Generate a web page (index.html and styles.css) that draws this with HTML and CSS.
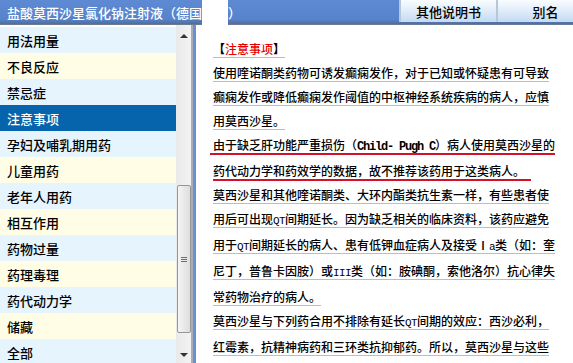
FILE: index.html
```html
<!DOCTYPE html>
<html lang="zh-CN">
<head>
<meta charset="utf-8">
<title>盐酸莫西沙星氯化钠注射液</title>
<link rel="stylesheet" href="styles.css">
</head>
<body>
<div class="app">
  <header class="topbar">
    <h1 class="title">盐酸莫西沙星氯化钠注射液（德国<span class="redact"></span>）</h1>
    <nav class="tabs">
      <button class="tab">其他说明书</button>
      <button class="tab">别名</button>
    </nav>
  </header>
  <div class="main">
    <aside class="side">
      <ul class="menu">
        <li class="item">用法用量</li>
        <li class="item">不良反应</li>
        <li class="item">禁忌症</li>
        <li class="item active">注意事项</li>
        <li class="item">孕妇及哺乳期用药</li>
        <li class="item">儿童用药</li>
        <li class="item">老年人用药</li>
        <li class="item">相互作用</li>
        <li class="item">药物过量</li>
        <li class="item">药理毒理</li>
        <li class="item">药代动力学</li>
        <li class="item">储藏</li>
        <li class="item">全部</li>
      </ul>
      <div class="scrollbar">
        <div class="sb-btn"><span class="arrow up"></span></div>
        <div class="sb-track"><div class="thumb" style="margin-top:138px;height:148px"><span class="grip"></span></div></div>
        <div class="sb-btn"><span class="arrow down"></span></div>
      </div>
    </aside>
    <article class="content">
      <p class="para"><span class="ul"><span class="bracket">【</span><span class="head-red">注意事项</span><span class="bracket">】</span></span></p>
      <p class="para"><span class="ul">使用喹诺酮类药物可诱发癫痫发作，对于已知或怀疑患有可导致<br>癫痫发作或降低癫痫发作阈值的中枢神经系统疾病的病人，应慎<br>用莫西沙星。</span></p>
      <p class="para"><span class="mark">由于缺乏肝功能严重损伤（<span class="code">Child- Pugh C</span>）病人使用莫西沙星的<br>药代动力学和药效学的数据，故不推荐该药用于这类病人。</span></p>
      <p class="para"><span class="ul">莫西沙星和其他喹诺酮类、大环内酯类抗生素一样，有些患者使<br>用后可出现<span class="mono">QT</span>间期延长。因为缺乏相关的临床资料，该药应避免<br>用于<span class="mono">QT</span>间期延长的病人、患有低钾血症病人及接受Ⅰ<span class="mono">a</span>类（如：奎<br>尼丁，普鲁卡因胺）或<span class="mono">III</span>类（如：胺碘酮，索他洛尔）抗心律失<br>常药物治疗的病人。</span></p>
      <p class="para"><span class="ul">莫西沙星与下列药合用不排除有延长<span class="mono">QT</span>间期的效应：西沙必利，<br>红霉素，抗精神病药和三环类抗抑郁药。所以，莫西沙星与这些</span></p>
    </article>
  </div>
</div>
</body>
</html>
```
FILE: styles.css
```css
* { box-sizing: border-box; }
html, body { margin: 0; padding: 0; overflow: hidden; }
body {
  width: 573px;
  height: 363px;
  background: #fff;
  font-family: "Noto Sans CJK SC", "Noto Sans", sans-serif;
}
.app { width: 573px; height: 363px; overflow: hidden; }

.topbar {
  position: relative;
  z-index: 1;
  display: flex;
  height: 24px;
  background: linear-gradient(#5d8ad2, #5783cc 80%, #4f6e9e);
}
.title {
  display: flex;
  align-items: center;
  margin: 0;
  padding-left: 7px;
  font-size: 13px;
  font-weight: 500;
  color: #fff;
  white-space: nowrap;
}
.redact {
  align-self: stretch;
  width: 26px;
  margin-bottom: -3px;
  background: #fff;
}
.tabs {
  display: flex;
  height: 22px;
  margin-left: auto;
  margin-right: -20px;
}
.tab {
  width: 97px;
  height: 22px;
  padding: 0;
  border: 0;
  border-left: 2px solid #b9c6d6;
  font: 500 13px "Noto Sans CJK SC", sans-serif;
  color: #000;
  background: linear-gradient(#fafcff, #dceaf9 55%, #c3daf3);
}

.main {
  display: flex;
  height: 342px;
  border-top: 1px solid #6c7a90;
}
.side {
  display: flex;
  width: 193px;
  border-right: 2px solid #a9aeb5;
  background: #fff;
}
.menu {
  flex: 1;
  margin: 0;
  padding: 2px 0 0 0;
  list-style: none;
}
.item {
  display: flex;
  align-items: center;
  height: 26px;
  padding-left: 7px;
  font-size: 13px;
  font-weight: 500;
  color: #000;
  background: #e6f4fe;
}
.item:nth-child(even) { background: #fffde5; }
.item.active { background: #0664ad; color: #fff; }

.scrollbar {
  display: flex;
  flex-direction: column;
  width: 15px;
  background: linear-gradient(to right, #e9e9e9, #f3f3f3);
}
.sb-btn {
  display: flex;
  align-items: center;
  justify-content: center;
  height: 22px;
  flex: none;
}
.arrow { width: 0; height: 0; border-left: 4px solid transparent; border-right: 4px solid transparent; }
.arrow.up { border-bottom: 4px solid #333; }
.arrow.down { border-top: 4px solid #333; }
.sb-track { flex: 1; padding: 0 0 0 1px; }
.thumb {
  display: flex;
  align-items: center;
  justify-content: center;
  width: 14px;
  border: 1px solid #969696;
  border-radius: 2px;
  background: linear-gradient(to right, #f4f4f4, #dedede);
}
.grip {
  width: 6px;
  height: 5px;
  background: repeating-linear-gradient(#6e6e6e 0 1px, transparent 1px 2px);
}

.content {
  flex: 1;
  padding: 12px 0 0 17px;
  border-left: 3px solid #6b8fd3;
  font-size: 12px;
  font-weight: 500;
  line-height: 24px;
  color: #000;
  background: #fff;
  white-space: nowrap;
}
.para { margin: 0; }
.ul { border-bottom: 1px solid #bdbdbd; }
.mark { border-bottom: 2px solid #d4112c; padding-left: 3px; margin-left: -3px; padding-right: 6px; }
.bracket { font-weight: bold; }
.head-red { color: #e60000; }
.mono { font-family: "Liberation Mono", monospace; font-size: 11px; letter-spacing: -0.6px; font-weight: normal; }
.code { font-family: "Liberation Mono", monospace; font-size: 12px; font-weight: bold; letter-spacing: -1.2px; }
```
